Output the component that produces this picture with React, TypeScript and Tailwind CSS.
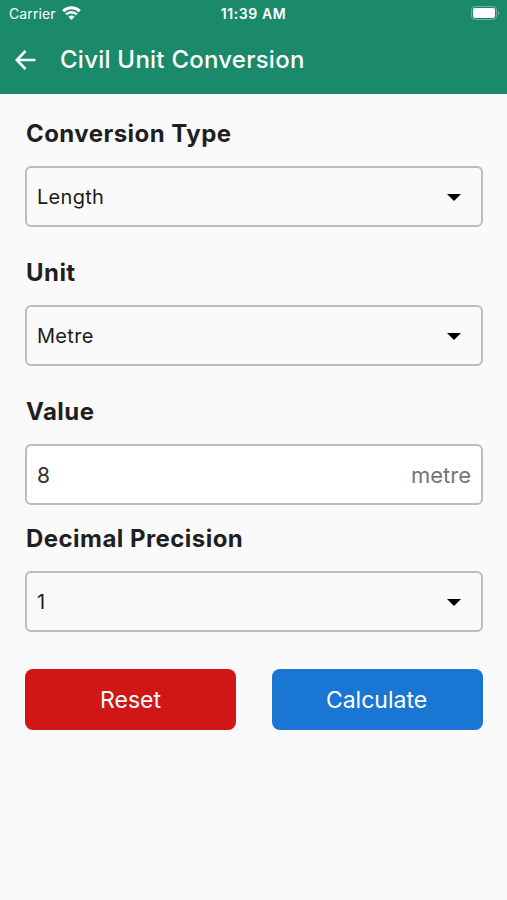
import React, { useState } from 'react';

interface SelectFieldProps {
  label: string;
  value: string;
}

function FieldLabel({ children }: { children: React.ReactNode }) {
  return (
    <h2 className="h-8 pl-px pt-px text-[24px] leading-8 font-bold tracking-[0.45px] text-[#1f1f1f]">{children}</h2>
  );
}

function SelectField({ label, value }: SelectFieldProps) {
  return (
    <div>
      <FieldLabel>{label}</FieldLabel>
      <button className="mt-[17px] flex h-[61px] w-full items-center justify-between rounded-[6px] border-2 border-[#bcbcbc] pl-[10px] pr-5 text-left">
        <span className="text-[20px] tracking-[0.3px] text-[#1c1c1c]">{value}</span>
        <svg className="mt-px h-[7px] w-[14px]" viewBox="0 0 14 7" fill="#000">
          <path d="M0 0h14L7 7z" />
        </svg>
      </button>
    </div>
  );
}

function StatusBar() {
  return (
    <div className="flex h-[27px] items-center justify-between pl-[9px] pr-[7px] text-white">
      <div className="flex w-[120px] items-center gap-[6px]">
        <span className="text-[14px] tracking-[0.1px]">Carrier</span>
        <svg className="mb-px h-[14px] w-[19px]" viewBox="0 0 19 14">
          <path d="M1.2 5.1a12 12 0 0 1 16.6 0" fill="none" stroke="#fff" strokeWidth="2.9" />
          <path d="M4.1 8.4a7.8 7.8 0 0 1 10.8 0" fill="none" stroke="#fff" strokeWidth="2.6" />
          <path d="M6.4 10.8a4.6 4.6 0 0 1 6.2 0L9.5 14z" fill="#fff" />
        </svg>
      </div>
      <span className="mr-[2px] text-[14px] font-semibold tracking-[0.6px]">11:39 AM</span>
      <div className="flex w-[120px] justify-end">
        <svg className="mb-px h-[14px] w-[29px]" viewBox="0 0 29 14">
          <rect x="0.5" y="0.5" width="25" height="13" rx="3.5" fill="none" stroke="#6bb19b" />
          <rect x="2" y="2" width="22" height="10" rx="2" fill="#fff" />
          <path d="M27 5q2.6 2 0 4z" fill="#7bbaa6" />
        </svg>
      </div>
    </div>
  );
}

export default function App() {
  const [value, setValue] = useState('8');

  return (
    <div className="h-[900px] w-[507px] overflow-hidden bg-[#fafafa] font-['Inter',sans-serif]">
      <header className="h-[94px] bg-[#1b8a6b]">
        <StatusBar />
        <div className="flex h-[66px] items-center pl-[15px] text-white">
          <svg className="h-5 w-[21px]" viewBox="0 0 21 20" fill="none" stroke="#fff" strokeWidth="2.6">
            <path d="M20.5 10H2M10.5 1L1.7 10l8.8 9" />
          </svg>
          <h1 className="ml-6 text-[24px] font-medium tracking-[0.24px]">Civil Unit Conversion</h1>
        </div>
      </header>

      <main className="pl-[25px] pr-[24px] pt-[23px]">
        <SelectField label="Conversion Type" value="Length" />
        <div className="mt-[29px]">
          <SelectField label="Unit" value="Metre" />
        </div>
        <div className="mt-[29px]">
          <FieldLabel>Value</FieldLabel>
          <div className="mt-[17px] flex h-[61px] items-center rounded-[6px] border-2 border-[#bcbcbc] bg-white pl-[10px] pr-[10px]">
            <input
              value={value}
              onChange={(e) => setValue(e.target.value)}
              className="min-w-0 flex-1 pt-[2px] text-[21px] text-[#333] outline-none"
            />
            <span className="pt-[2px] text-[22px] text-[#757575]">metre</span>
          </div>
        </div>
        <div className="mt-[17px]">
          <SelectField label="Decimal Precision" value="1" />
        </div>
        <div className="mt-[37px] grid grid-cols-2 gap-[36px]">
          <button className="h-[61px] rounded-[8px] bg-[#d01716] pt-px text-[23px] text-white">Reset</button>
          <button className="h-[61px] rounded-[8px] bg-[#1976d2] pt-px pr-[2px] text-[23px] text-white">Calculate</button>
        </div>
      </main>
    </div>
  );
}
